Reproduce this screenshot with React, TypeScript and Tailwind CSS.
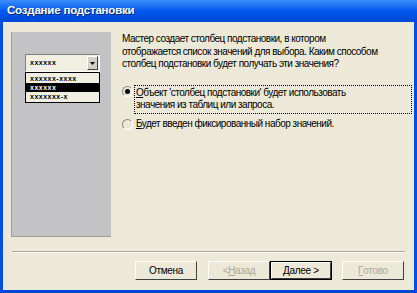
import React from 'react';

const font = { fontFamily: '"Liberation Sans", Arial, sans-serif' };

const Radio = ({ checked }: { checked?: boolean }) => (
  <span className="relative mt-[1px] h-[11px] w-[11px] shrink-0 rounded-full border border-t-[#8e8c84] border-l-[#8e8c84] border-r-[#ffffff] border-b-[#ffffff] bg-[#ece9d8]">
    {checked && <span className="absolute left-[2px] top-[2px] h-[5px] w-[5px] rounded-full bg-black" />}
  </span>
);

const XpButton = ({
  children,
  disabled,
  isDefault,
}: {
  children: React.ReactNode;
  disabled?: boolean;
  isDefault?: boolean;
}) => (
  <div className={`h-[19px] w-[62px] ${isDefault ? 'border border-black' : ''}`}>
    <div
      className={`flex h-full w-full items-center justify-center border border-t-white border-l-white border-r-[#404040] border-b-[#404040] text-[10px] tracking-[-0.3px] ${
        disabled ? 'text-[#aca899]' : 'text-black'
      }`}
    >
      {children}
    </div>
  </div>
);

export default function App() {
  return (
    <div className="flex h-[293px] w-[417px] flex-col select-none" style={font}>
      {/* Title bar */}
      <div className="flex h-[22px] items-center bg-gradient-to-b from-[#3b8cfa] via-[#0058ee] to-[#0047d6] pl-[7px]">
        <span className="text-[11.5px] font-bold tracking-[-0.2px] text-white [text-shadow:1px_1px_0_#0a246a]">
          Создание подстановки
        </span>
      </div>

      {/* Window body */}
      <div className="flex flex-1 flex-col border-x-[3px] border-b-[3px] border-x-[#0050e6] border-b-[#0047d6] bg-[#ece9d8]">
        <div className="ml-[8px] mt-[10px] flex">
          {/* Preview panel */}
          <div className="flex h-[205px] w-[100px] shrink-0 flex-col border-l border-b border-l-[#a19f95] border-b-[#a19f95] bg-[#c3c2c4] pl-[13px] pt-[22px]">
            <div className="flex h-[18px] w-[75px] items-center border border-t-[#808080] border-l-[#808080] border-r-white border-b-white bg-[#f1efe2] pl-[4px] pr-[1px]">
              <span className="flex-1 text-[7px] font-bold tracking-[0.5px] text-black">xxxxxx</span>
              <span className="flex h-[14px] w-[11px] items-center justify-center border border-t-white border-l-white border-r-[#404040] border-b-[#404040] bg-[#d4d0c8]">
                <svg width="5" height="3" viewBox="0 0 5 3">
                  <path d="M0 0h5L2.5 3z" fill="black" />
                </svg>
              </span>
            </div>
            <div className="flex w-[75px] flex-col border border-black bg-[#f1efe2] py-[1px] text-[7px] font-bold leading-[9px] tracking-[0.5px]">
              <span className="px-[4px] text-black">xxxxxx-xxxx</span>
              <span className="bg-black px-[4px] text-white">xxxxxx</span>
              <span className="px-[4px] text-black">xxxxxxx-x</span>
            </div>
          </div>

          {/* Question */}
          <div className="ml-[11px] flex flex-1 flex-col pt-[1px] text-[10px] leading-[12.5px] tracking-[-0.5px] text-black">
            <p>
              Мастер создает столбец подстановки, в котором
              <br />
              отображается список значений для выбора. Каким способом
              <br />
              столбец подстановки будет получать эти значения?
            </p>
            <div className="mt-[14px] flex gap-[1px]">
              <Radio checked />
              <div className="mr-[2px] flex-1 border border-dotted border-black py-[1px] pl-[1px]">
                <span className="underline">О</span>бъект 'столбец подстановки' будет использовать
                <br />
                значения из таблиц или запроса.
              </div>
            </div>
            <div className="mt-[4px] flex gap-[1px]">
              <Radio />
              <span className="pl-[2px]">
                <span className="underline">Б</span>удет введен фиксированный набор значений.
              </span>
            </div>
          </div>
        </div>

        {/* Separator */}
        <div className="mx-[9px] mt-[14px] h-[2px] border-t border-b border-t-[#aca899] border-b-white" />

        {/* Buttons */}
        <div className="mr-[10px] mt-[8px] flex justify-end">
          <XpButton>Отмена</XpButton>
          <div className="w-[11px]" />
          <XpButton disabled>
            &lt; <span className="underline">Н</span>азад
          </XpButton>
          <XpButton isDefault>
            <span className="underline">Д</span>алее &gt;
          </XpButton>
          <div className="w-[10px]" />
          <XpButton disabled>
            <span className="underline">Г</span>отово
          </XpButton>
        </div>
      </div>
    </div>
  );
}
